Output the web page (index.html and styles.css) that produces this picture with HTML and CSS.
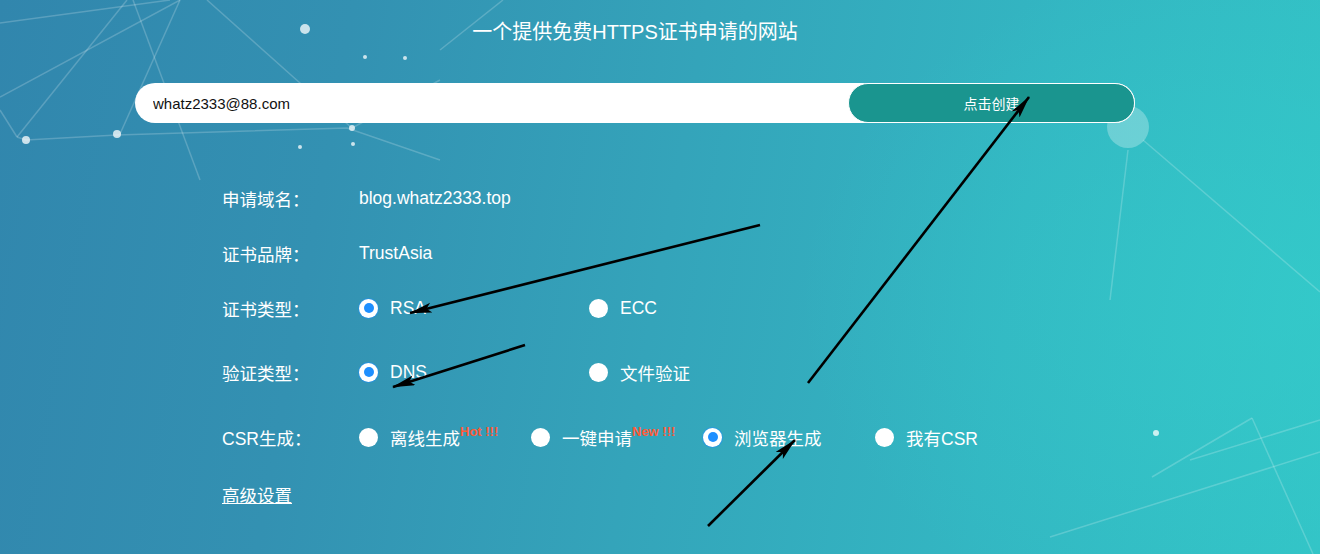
FILE: index.html
```html
<!DOCTYPE html>
<html lang="zh-CN">
<head>
<meta charset="utf-8">
<title>免费HTTPS证书申请</title>
<link rel="stylesheet" href="styles.css">
</head>
<body>
<div class="page">
  <svg class="bg-net" width="1320" height="554" viewBox="0 0 1320 554" aria-hidden="true">
    <g class="net-lines">
      <line x1="0" y1="23" x2="170" y2="0"/>
      <line x1="0" y1="97" x2="180" y2="0"/>
      <line x1="17" y1="137" x2="127" y2="0"/>
      <line x1="0" y1="110" x2="17" y2="137"/>
      <line x1="17" y1="137" x2="26" y2="140"/>
      <polyline points="26,140 117,135 347,128 440,160"/>
      <line x1="133" y1="0" x2="200" y2="180"/>
      <line x1="207" y1="0" x2="300" y2="83"/>
      <line x1="300" y1="83" x2="352" y2="128"/>
      <line x1="352" y1="128" x2="440" y2="80"/>
      <line x1="440" y1="50" x2="503" y2="0"/>
      <line x1="180" y1="0" x2="120" y2="134"/>
      <line x1="1143" y1="140" x2="1320" y2="292"/>
      <line x1="1190" y1="460" x2="1320" y2="420"/>
      <line x1="1050" y1="537" x2="1320" y2="452"/>
      <line x1="1252" y1="418" x2="1313" y2="554"/>
      <line x1="1252" y1="418" x2="1152" y2="477"/>
      <line x1="1128" y1="150" x2="1110" y2="300"/>
    </g>
    <g class="net-dots">
      <circle cx="305" cy="29" r="5"/>
      <circle cx="365" cy="57" r="2"/>
      <circle cx="405" cy="58" r="2"/>
      <circle cx="26" cy="140" r="4"/>
      <circle cx="117" cy="134" r="4"/>
      <circle cx="300" cy="147" r="2"/>
      <circle cx="353" cy="144" r="2"/>
      <circle cx="352" cy="128" r="3"/>
      <circle cx="1156" cy="433" r="3"/>
    </g>
    <circle class="big-dot" cx="1128" cy="127" r="21"/>
  </svg>

  <main class="main">
    <h1 class="title">一个提供免费HTTPS证书申请的网站</h1>

    <div class="search">
      <input class="email" type="text" value="whatz2333@88.com">
      <button class="create" type="button">点击创建</button>
    </div>

    <div class="form">
      <div class="row">
        <span class="label">申请域名：</span>
        <span class="value">blog.whatz2333.top</span>
      </div>
      <div class="row gap-s">
        <span class="label">证书品牌：</span>
        <span class="value">TrustAsia</span>
      </div>
      <div class="row gap-s">
        <span class="label">证书类型：</span>
        <div class="opts">
          <label class="opt wide"><span class="radio checked"></span><span>RSA</span></label>
          <label class="opt wide"><span class="radio"></span><span>ECC</span></label>
        </div>
      </div>
      <div class="row gap-l">
        <span class="label">验证类型：</span>
        <div class="opts">
          <label class="opt wide"><span class="radio checked"></span><span>DNS</span></label>
          <label class="opt wide"><span class="radio"></span><span>文件验证</span></label>
        </div>
      </div>
      <div class="row gap-l2">
        <span class="label">CSR生成：</span>
        <div class="opts">
          <label class="opt narrow"><span class="radio"></span><span>离线生成<span class="tag">Hot !!!</span></span></label>
          <label class="opt narrow"><span class="radio"></span><span>一键申请<span class="tag">New !!!</span></span></label>
          <label class="opt narrow"><span class="radio checked"></span><span>浏览器生成</span></label>
          <label class="opt narrow"><span class="radio"></span><span>我有CSR</span></label>
        </div>
      </div>
      <div class="row gap-m">
        <a class="advanced" href="#">高级设置</a>
      </div>
    </div>
  </main>

  <svg class="arrows" width="1320" height="554" viewBox="0 0 1320 554" aria-hidden="true">
    <defs>
      <marker id="head" markerUnits="userSpaceOnUse" markerWidth="24" markerHeight="12" refX="22" refY="5" orient="auto">
        <path d="M0,0 L23,5 L0,10 L5,5 z" fill="#000"/>
      </marker>
    </defs>
    <line x1="760" y1="225" x2="410" y2="313" marker-end="url(#head)"/>
    <line x1="525" y1="345" x2="393" y2="387" marker-end="url(#head)"/>
    <line x1="808" y1="383" x2="1029" y2="97" marker-end="url(#head)"/>
    <line x1="708" y1="526" x2="795" y2="440" marker-end="url(#head)"/>
  </svg>
</div>
</body>
</html>
```

FILE: styles.css
```css
html, body {
  margin: 0;
  padding: 0;
}

body {
  font-family: "Liberation Sans", Arial, "Noto Sans CJK SC", sans-serif;
  color: #fff;
  overflow: hidden;
}

.page {
  position: relative;
  width: 1320px;
  height: 554px;
  overflow: hidden;
  background:
    radial-gradient(ellipse 520px 360px at 1320px 300px, rgba(52, 206, 204, 0.55), rgba(52, 206, 204, 0) 100%),
    linear-gradient(100deg, #3186ad 0%, #3391b2 25%, #34a4ba 50%, #33b6c2 75%, #33c3c6 100%);
}

.bg-net {
  position: absolute;
  left: 0;
  top: 0;
}

.net-lines line,
.net-lines polyline {
  stroke: rgba(255, 255, 255, 0.2);
  stroke-width: 1.5;
  fill: none;
}

.net-dots circle {
  fill: rgba(255, 255, 255, 0.75);
}

.big-dot {
  fill: rgba(255, 255, 255, 0.28);
}

.main {
  position: relative;
  width: 1000px;
  margin-left: 135px;
}

.title {
  margin: 0;
  padding-top: 20px;
  font-size: 20px;
  line-height: 24px;
  font-weight: normal;
  text-align: center;
  color: #fff;
}

.search {
  display: flex;
  margin-top: 39px;
  height: 40px;
  background: #fff;
  border-radius: 20px;
}

.email {
  flex: 1;
  min-width: 0;
  border: none;
  outline: none;
  background: transparent;
  padding: 0 0 0 18px;
  font-family: "Liberation Sans", Arial, sans-serif;
  font-size: 15px;
  color: #111;
}

.create {
  width: 287px;
  height: 40px;
  box-sizing: border-box;
  border: 1px solid #fff;
  border-radius: 20px;
  background: #1a958f;
  color: #fff;
  font-family: "Liberation Sans", Arial, "Noto Sans CJK SC", sans-serif;
  font-size: 14px;
  cursor: pointer;
}

.form {
  margin-top: 55px;
  margin-left: 87px;
  display: flex;
  flex-direction: column;
}

.row {
  display: flex;
  align-items: center;
  height: 40px;
  font-size: 17.5px;
}

.gap-s { margin-top: 15px; }
.gap-l { margin-top: 24px; }
.gap-l2 { margin-top: 25px; }
.gap-m { margin-top: 17px; }

.label {
  width: 137px;
  flex: none;
}

.opts {
  display: flex;
  align-items: center;
}

.opt {
  display: inline-flex;
  align-items: center;
  gap: 12px;
  cursor: pointer;
}

.opt.wide { width: 230px; }
.opt.narrow { width: 172px; }

.radio {
  position: relative;
  width: 19px;
  height: 19px;
  border-radius: 50%;
  background: #fff;
  flex: none;
}

.radio.checked::after {
  content: "";
  position: absolute;
  left: 4.5px;
  top: 4.5px;
  width: 10px;
  height: 10px;
  border-radius: 50%;
  background: #1e8fff;
}

.radio.checked {
  box-shadow: 0 0 0 1px rgba(30, 143, 255, 0.5);
}

.tag {
  position: relative;
  top: -9px;
  font-size: 13px;
  font-weight: bold;
  color: #ff5b38;
}

.advanced {
  color: #fff;
  text-decoration: underline;
  font-size: 17.5px;
}

.arrows {
  position: absolute;
  left: 0;
  top: 0;
  pointer-events: none;
}

.arrows line {
  stroke: #000;
  stroke-width: 2.6;
}
```
